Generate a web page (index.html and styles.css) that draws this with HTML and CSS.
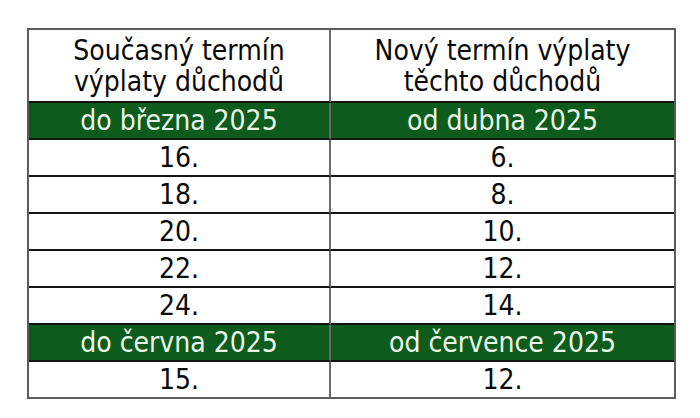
FILE: index.html
```html
<!DOCTYPE html>
<html lang="cs">
<head>
<meta charset="utf-8">
<title>Termíny výplaty důchodů</title>
<link rel="stylesheet" href="styles.css">
</head>
<body>
<table class="terms">
  <thead>
    <tr class="head">
      <th class="c1">Současný termín<br>výplaty důchodů</th>
      <th class="c2">Nový termín výplaty<br>těchto důchodů</th>
    </tr>
  </thead>
  <tbody>
    <tr class="band"><td class="c1">do března 2025</td><td class="c2">od dubna 2025</td></tr>
    <tr class="row"><td class="c1">16.</td><td class="c2">6.</td></tr>
    <tr class="row"><td class="c1">18.</td><td class="c2">8.</td></tr>
    <tr class="row"><td class="c1">20.</td><td class="c2">10.</td></tr>
    <tr class="row"><td class="c1">22.</td><td class="c2">12.</td></tr>
    <tr class="row"><td class="c1">24.</td><td class="c2">14.</td></tr>
    <tr class="band"><td class="c1">do června 2025</td><td class="c2">od července 2025</td></tr>
    <tr class="row last"><td class="c1">15.</td><td class="c2">12.</td></tr>
  </tbody>
</table>
</body>
</html>
```
FILE: styles.css
```css
html, body {
  margin: 0;
  padding: 0;
  background: #ffffff;
}
body {
  padding: 28px 0 0 27px;
  font-family: "DejaVu Sans Condensed", "DejaVu Sans", sans-serif;
  font-stretch: condensed;
}
.terms {
  border-collapse: separate;
  border-spacing: 0;
  border: 2px solid #5c5c5c;
  font-size: 28px;
  color: #0a0a0a;
}
.terms th,
.terms td {
  padding: 0;
  text-align: center;
  font-weight: normal;
  border-bottom: 2px solid #141414;
  box-sizing: content-box;
}
.terms .c1 {
  width: 300px;
  border-right: 2px solid #6a6a6a;
}
.terms .c2 {
  width: 343px;
}
.head th {
  height: 71px;
  line-height: 31px;
  vertical-align: middle;
}
.row td,
.band td {
  height: 35px;
  line-height: 35px;
}
.band td {
  background: #0d5c1e;
  color: #eaf5e6;
}
.last td {
  border-bottom: none;
  height: 34px;
}
```
